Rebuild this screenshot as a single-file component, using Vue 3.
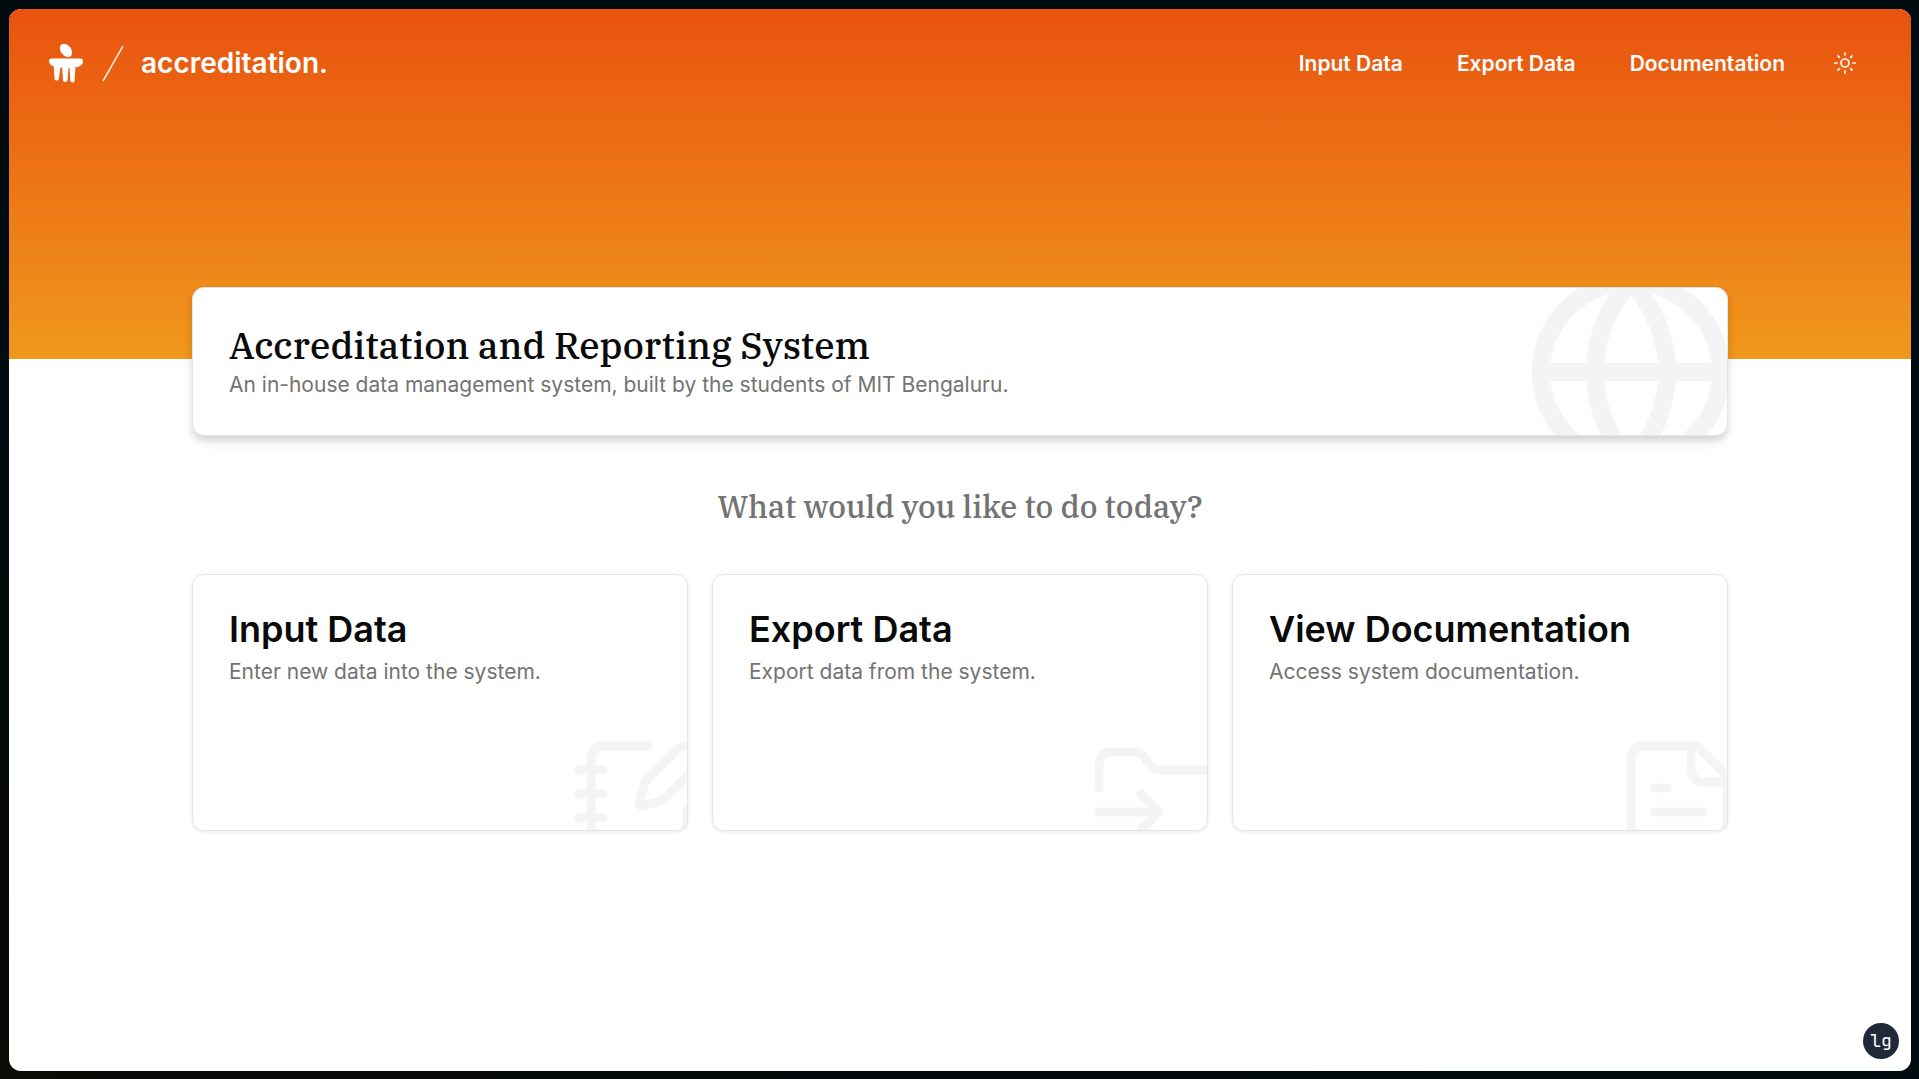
<script setup>
const links = ['Input Data', 'Export Data', 'Documentation']

const cards = [
  {
    title: 'Input Data',
    text: 'Enter new data into the system.',
    paths: [
      'M13.4 2H6a2 2 0 0 0-2 2v16a2 2 0 0 0 2 2h12a2 2 0 0 0 2-2v-7.4',
      'M2 6h4',
      'M2 10h4',
      'M2 14h4',
      'M2 18h4',
      'M21.378 5.626a1 1 0 1 0-3.004-3.004l-5.01 5.012a2 2 0 0 0-.506.854l-.837 2.87a.5.5 0 0 0 .62.62l2.87-.837a2 2 0 0 0 .854-.506z',
    ],
  },
  {
    title: 'Export Data',
    text: 'Export data from the system.',
    paths: [
      'M2 9V5a2 2 0 0 1 2-2h3.9a2 2 0 0 1 1.69.9l.81 1.2a2 2 0 0 0 1.67.9H20a2 2 0 0 1 2 2v10a2 2 0 0 1-2 2H4a2 2 0 0 1-2-2v-1',
      'M2 13h10',
      'm9 16 3-3-3-3',
    ],
  },
  {
    title: 'View Documentation',
    text: 'Access system documentation.',
    paths: [
      'M15 2H6a2 2 0 0 0-2 2v16a2 2 0 0 0 2 2h12a2 2 0 0 0 2-2V7Z',
      'M14 2v4a2 2 0 0 0 2 2h4',
      'M10 9H8',
      'M16 13H8',
      'M16 17H8',
    ],
  },
]
</script>

<template>
  <div class="desktop">
    <div class="window">
      <header class="hero">
        <a class="brand" href="#">
          <svg class="logo" viewBox="0 0 36 40" aria-hidden="true">
            <ellipse cx="18" cy="7.3" rx="5.2" ry="7.4" transform="rotate(-38 18 7.3)" />
            <path
              d="M3.5 15.5H32.5C34.5 15.5 35.2 17 35 18.8C34.6 22 31.5 24 27.5 24.2C27 28 26.9 33 26.7 37.5C26.5 40.200 22.6 40.2 22.4 37.5L21.6 25H20.6L19.6 37C19.3 39.8 15.2 39.8 15 37L14.2 24.5H12.4L10.9 35.5C10.5 38.4 6.7 38.2 6.5 35.5L5.8 23.5C3 22.5 1.3 20.5 1 18.5C.8 16.5 1.8 15.5 3.5 15.5Z"
            />
          </svg>
          <svg class="slash" viewBox="0 0 22 36" aria-hidden="true"><path d="M1 36L21 1" /></svg>
          <span class="brand-name">accreditation.</span>
        </a>
        <nav class="nav">
          <a v-for="link in links" :key="link" href="#">{{ link }}</a>
          <button class="theme" type="button" aria-label="Toggle theme">
            <svg viewBox="0 0 24 24" aria-hidden="true">
              <circle cx="12" cy="12" r="4" />
              <path
                d="M12 2v2M12 20v2M4.93 4.93l1.41 1.41M17.66 17.66l1.41 1.41M2 12h2M20 12h2M6.34 17.66l-1.41 1.41M19.07 4.93l-1.41 1.41"
              />
            </svg>
          </button>
        </nav>
      </header>

      <main class="content">
        <section class="card intro">
          <svg class="art globe" viewBox="0 0 24 24" aria-hidden="true">
            <circle cx="12" cy="12" r="10" />
            <path d="M12 2a14.5 14.5 0 0 0 0 20 14.5 14.5 0 0 0 0-20M2 12h20" />
          </svg>
          <h1>Accreditation and Reporting System</h1>
          <p>An in-house data management system, built by the students of MIT Bengaluru.</p>
        </section>

        <h2 class="question">What would you like to do today?</h2>

        <div class="cards">
          <a v-for="card in cards" :key="card.title" class="card action" href="#">
            <svg class="art" viewBox="0 0 24 24" aria-hidden="true">
              <path v-for="d in card.paths" :key="d" :d="d" />
            </svg>
            <h3>{{ card.title }}</h3>
            <p>{{ card.text }}</p>
          </a>
        </div>
      </main>

      <button class="badge" type="button">lg</button>
    </div>
  </div>
</template>

<style>
body {
  margin: 0;
}
</style>

<style scoped>
.desktop {
  box-sizing: border-box;
  min-height: 100vh;
  padding: 9px 8px 8px 9px;
  display: flex;
  background: linear-gradient(to bottom left, #000b10 60%, #0a0a06);
  font-family: Inter, sans-serif;
  color: #0a0a0a;
}

.window {
  position: relative;
  flex: 1;
  min-width: 0;
  border-radius: 12px;
  overflow: hidden;
  background: #fff;
}

a {
  color: inherit;
  text-decoration: none;
}

.hero {
  box-sizing: border-box;
  height: 350px;
  padding: 32px 52px 0 39px;
  display: flex;
  align-items: flex-start;
  justify-content: space-between;
  background: linear-gradient(to bottom, #e9530f, #f0981d);
  color: #fff;
}

.brand {
  height: 44px;
  display: flex;
  align-items: center;
}

.logo {
  width: 36px;
  height: 40px;
  fill: currentColor;
}

.slash {
  width: 22px;
  height: 36px;
  margin: 0 17px 0 18px;
  fill: none;
  stroke: currentColor;
  stroke-width: 1.5;
}

.brand-name {
  font-size: 28px;
  line-height: 36px;
  font-weight: 600;
}

.nav {
  height: 46px;
  display: flex;
  align-items: center;
  gap: 54px;
  font-size: 21px;
  line-height: 28px;
  font-weight: 600;
}

.theme {
  width: 28px;
  height: 28px;
  padding: 1px 2px 3px;
  margin-left: -8px;
  border: 0;
  background: none;
  color: inherit;
}

.theme svg {
  display: block;
  width: 24px;
  height: 24px;
  fill: none;
  stroke: currentColor;
  stroke-width: 1.7;
  stroke-linecap: round;
}

.content {
  position: relative;
  max-width: 1536px;
  margin: -72px auto 0;
}

.card {
  position: relative;
  box-sizing: border-box;
  display: block;
  padding: 34px 36px;
  border: 1px solid #e5e5e5;
  border-radius: 12px;
  overflow: hidden;
  background: #fff;
}

.card h1,
.card h3,
.card p {
  position: relative;
  margin: 0;
}

.card h1,
.question {
  font-family: "IBM Plex Serif", "Noto Serif", "DejaVu Serif", serif;
  font-weight: 500;
}

.card h1 {
  font-size: 37px;
  line-height: 46px;
}

.card p {
  font-size: 21px;
  line-height: 33px;
  color: #737373;
}

.intro {
  box-shadow: 0 4px 7px rgb(0 0 0 / 14%), 0 10px 16px -4px rgb(0 0 0 / 6%);
}

.art {
  position: absolute;
  right: -24px;
  bottom: -48px;
  width: 144px;
  height: 144px;
  fill: none;
  stroke: #f4f4f4;
  stroke-width: 1.5;
  stroke-linecap: round;
  stroke-linejoin: round;
}

.globe {
  right: -12px;
  bottom: -45px;
  width: 216px;
  height: 216px;
  stroke-width: 2;
}

.question {
  margin: 51px 0 47px;
  font-size: 31px;
  line-height: 40px;
  text-align: center;
  color: #737373;
}

.cards {
  display: grid;
  grid-template-columns: repeat(3, 1fr);
  gap: 24px;
}

.action {
  min-height: 257px;
  padding: 32px 36px;
  box-shadow: 0 1px 4px rgb(0 0 0 / 10%);
}

.card h3 {
  font-size: 36px;
  line-height: 44px;
  font-weight: 600;
}

.action p {
  margin-top: 4px;
}

.badge {
  position: absolute;
  right: 12px;
  bottom: 12px;
  width: 36px;
  height: 36px;
  padding: 0;
  border: 0;
  border-radius: 50%;
  background: #1f2937;
  color: #fff;
  font-family: "JetBrains Mono", "Noto Sans Mono", "DejaVu Sans Mono", monospace;
  font-size: 18px;
  line-height: 36px;
}
</style>
